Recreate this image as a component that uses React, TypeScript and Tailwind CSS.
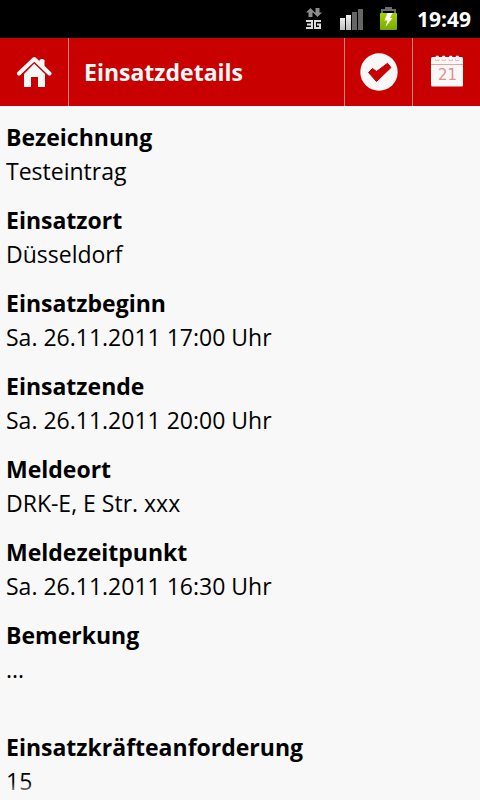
const details = [
  { label: "Bezeichnung", value: "Testeintrag" },
  { label: "Einsatzort", value: "Düsseldorf" },
  { label: "Einsatzbeginn", value: "Sa. 26.11.2011 17:00 Uhr" },
  { label: "Einsatzende", value: "Sa. 26.11.2011 20:00 Uhr" },
  { label: "Meldeort", value: "DRK-E, E Str. xxx" },
  { label: "Meldezeitpunkt", value: "Sa. 26.11.2011 16:30 Uhr" },
  { label: "Bemerkung", value: "...", spaced: true },
  { label: "Einsatzkräfteanforderung", value: "15" },
];

function NetworkIcon() {
  return (
    <svg width="18" height="24" viewBox="0 0 18 24" aria-hidden="true">
      <path d="M4.500 1 L9 5.500 H6.500 V10 H2.500 V5.500 H0 Z M9.500 1 H13.500 V5.500 H16 L11.500 10 L7 5.500 H9.500 Z" fill="#8c8c8c" />
      <path
        d="M0 14 H6 V21 H0 M1 17.500 H6 M15 14 H9 V21 H14 V17.500 H11"
        fill="none"
        stroke="#dcdcdc"
        strokeWidth="2"
      />
    </svg>
  );
}

function SignalIcon() {
  return (
    <svg width="24" height="22" viewBox="0 0 24 22" aria-hidden="true">
      <defs>
        <linearGradient id="bar-on" x1="0" y1="0" x2="0" y2="1">
          <stop offset="0" stopColor="#ededed" />
          <stop offset="1" stopColor="#bdbdbd" />
        </linearGradient>
      </defs>
      <rect x="0" y="10" width="5" height="12" fill="url(#bar-on)" />
      <rect x="6" y="7" width="5" height="15" fill="url(#bar-on)" />
      <rect x="12" y="4" width="5" height="18" fill="#666" />
      <rect x="18" y="1" width="5" height="21" fill="#666" />
    </svg>
  );
}

function BatteryIcon() {
  return (
    <svg width="18" height="24" viewBox="0 0 18 24" aria-hidden="true">
      <defs>
        <linearGradient id="charge" x1="0" y1="0" x2="0" y2="1">
          <stop offset="0" stopColor="#a4d400" />
          <stop offset="1" stopColor="#78a800" />
        </linearGradient>
      </defs>
      <path d="M5 0 H12 V2 H16 V6 H14 V4 H3 V6 H1 V2 H5 Z" fill="#6e6e6e" />
      <rect x="0" y="6" width="17" height="17" rx="1" fill="url(#charge)" />
      <path d="M7.500 6 H12.500 L10 11 H12.500 L5.500 20 L7.500 13.500 H4.500 Z" fill="#fff" />
    </svg>
  );
}

function HomeIcon() {
  return (
    <svg width="36" height="32" viewBox="0 0 36 32" aria-hidden="true">
      <path d="M23.500 4 Q26 2 28.500 4 V13 L23.500 8 Z" fill="#f8f8f8" />
      <path d="M3 17.500 L18.300 3 L33.500 17.500" fill="none" stroke="#f8f8f8" strokeWidth="4" strokeLinecap="round" strokeLinejoin="round" />
      <path d="M18.300 7.500 L29 18 V31 H22 V21 H15 V31 H8 V18 Z" fill="#f8f8f8" />
      <path d="M6 18.500 L18.300 6.700 L30.500 18.500" fill="none" stroke="#c80000" strokeWidth="1" />
    </svg>
  );
}

function CheckIcon() {
  return (
    <svg width="38" height="38" viewBox="0 0 38 38" aria-hidden="true">
      <circle cx="19" cy="19" r="18.700" fill="#f8f8f8" />
      <path
        d="M8.500 19.500 L12.500 15.500 L16.500 18.500 L27.500 10.300 L31 14.500 L16.500 28.500 Z"
        fill="#c80000"
        stroke="#c80000"
        strokeLinejoin="round"
      />
    </svg>
  );
}

function CalendarIcon() {
  return (
    <svg width="34" height="34" viewBox="0 0 34 34" aria-hidden="true">
      <rect x="1" y="2" width="32" height="29.500" rx="1.500" fill="#f8f8f8" />
      <path d="M6 2 V1 H8.500 V2 M12.500 2 V1 H15 V2 M19.500 2 V1 H22 V2 M26 2 V1 H28.500 V2" fill="#f8f8f8" stroke="#f8f8f8" strokeWidth="0.5" />
      <path d="M1 9.500 H33" stroke="#eda0a0" />
      <path d="M5.500 4 V5.500 H9 V4 M12 4 V5.500 H15.500 V4 M19 4 V5.500 H22.500 V4 M25.500 4 V5.500 H29 V4" fill="none" stroke="#f2b8b8" strokeLinejoin="round" />
      <text x="17.500" y="25" textAnchor="middle" fontSize="15" fill="#e58f8f" fontFamily="DejaVu Sans, sans-serif">
        21
      </text>
    </svg>
  );
}

export default function App() {
  return (
    <div className="relative flex min-h-screen flex-col bg-[#f8f8f8] font-['Open_Sans','Noto_Sans',sans-serif] text-black">
      <div className="flex h-[38px] items-center justify-end bg-black pr-[9px] text-white">
        <div className="flex items-center gap-4">
          <NetworkIcon />
          <SignalIcon />
          <BatteryIcon />
        </div>
        <time className="ml-[19px] pt-px text-[21px] font-bold">19:49</time>
      </div>

      <header className="flex h-[68px] items-stretch bg-[#c80000] text-[#f8f8f8]">
        <button type="button" aria-label="Startseite" className="flex w-[69px] items-center justify-center border-r border-[#e08080]">
          <HomeIcon />
        </button>
        <h1 className="flex flex-1 items-center pt-px pl-[15px] text-[23px] font-bold">Einsatzdetails</h1>
        <button type="button" aria-label="Bestätigen" className="flex w-[68px] items-center justify-center border-l border-[#e08080]">
          <CheckIcon />
        </button>
        <button type="button" aria-label="Kalender" className="flex w-[68px] items-center justify-center border-l border-[#e08080]">
          <CalendarIcon />
        </button>
      </header>

      <dl className="flex flex-col gap-[15px] px-1.5 pt-3.5 text-[23px] leading-[34px]">
        {details.map((item) => (
          <div key={item.label} className={item.spaced ? "pb-[29px]" : ""}>
            <dt className="font-bold">{item.label}</dt>
            <dd>{item.value}</dd>
          </div>
        ))}
      </dl>

      <div className="pointer-events-none absolute inset-x-0 bottom-0 h-[18px] bg-linear-to-t from-[#f8f8f8] to-transparent" />
    </div>
  );
}
